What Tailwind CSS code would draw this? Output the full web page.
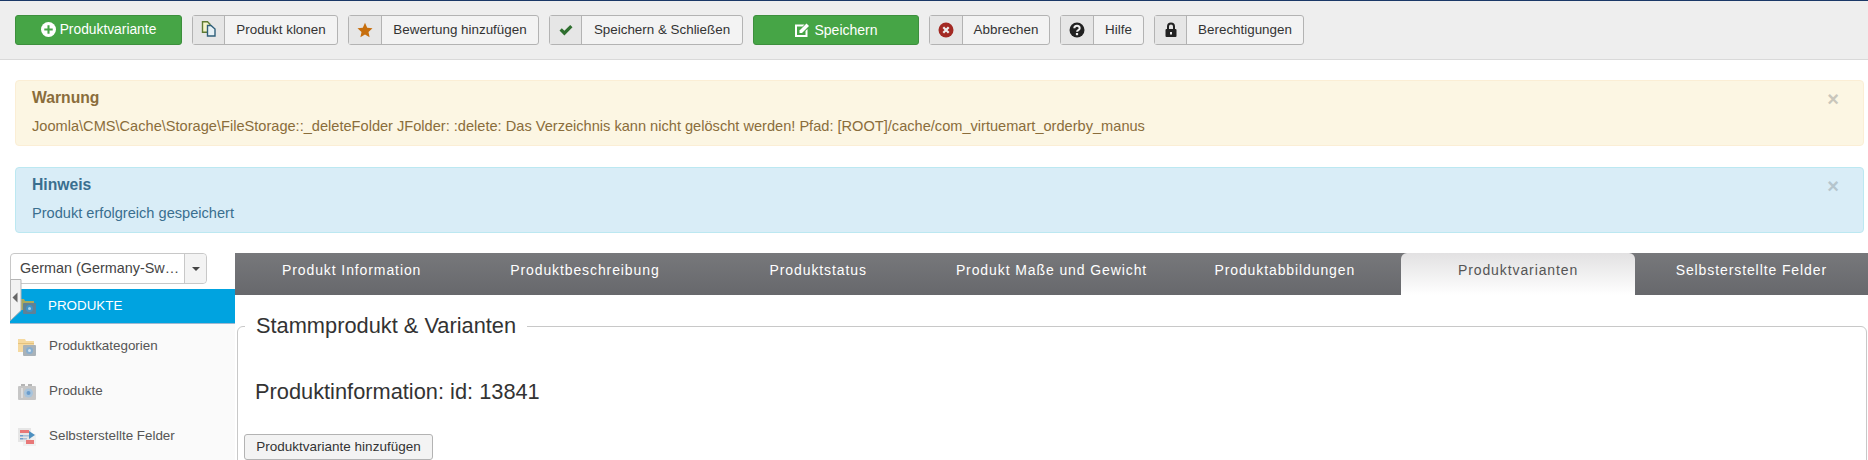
<!DOCTYPE html>
<html lang="en">
<head>
  <meta charset="UTF-8" />
  <title>Produkt bearbeiten</title>
  <script src="https://cdn.jsdelivr.net/npm/@tailwindcss/browser@4"></script>
</head>
<body class="h-[460px] w-[1868px] overflow-hidden bg-white font-['Liberation_Sans',Arial,sans-serif] text-[14px] text-[#333]">
  <!-- toolbar -->
  <div class="flex h-[60px] gap-[10px] border-t border-b border-t-[#1a3867] border-b-[#d9d9d9] bg-[#eeeeee] pl-[15px] pt-[14px] text-[13.4px]">
    <button class="flex h-[30px] w-[167px] items-center justify-center gap-[4px] rounded-[3px] border border-[#3d8f3d] bg-[#46a546] text-[13.8px] text-white">
      <svg class="mb-[1px] h-[15px] w-[15px]" viewBox="0 0 16 16"><circle cx="8" cy="8" r="8" fill="#fff"/><path d="M8 3.500v9M3.500 8h9" stroke="#46a546" stroke-width="2.200"/></svg>
      Produktvariante
    </button>
    <button class="flex h-[30px] w-[146px] items-center rounded-[3px] border border-[#b3b3b3] bg-[#f3f3f3]">
      <span class="flex h-full w-[32px] items-center justify-center border-r border-[#b3b3b3] bg-[#e6e6e6] pb-[2px]">
        <svg class="h-[16px] w-[16px]" viewBox="0 0 16 16" fill="none" stroke-width="1.400"><path d="M1.500 .8h5l2.500 2.500v8h-7.500z" fill="#f3f3c8" stroke="#5e7a32"/><path d="M6.500 4.500h3.500l4 3.500v7h-7.500z" fill="#e6f0f5" stroke="#2f5f7a"/></svg>
      </span>
      <span class="flex-1 text-center">Produkt klonen</span>
    </button>
    <button class="flex h-[30px] w-[191px] items-center rounded-[3px] border border-[#b3b3b3] bg-[#f3f3f3]">
      <span class="flex h-full w-[33px] items-center justify-center border-r border-[#b3b3b3] bg-[#e6e6e6] pb-[1px]">
        <svg class="h-[16px] w-[16px]" viewBox="0 0 16 16"><path d="M8 .8l2.200 4.900 5.300.6-4 3.600 1.100 5.300L8 12.500l-4.600 2.700 1.100-5.300-4-3.600 5.300-.6z" fill="#c76f0e"/></svg>
      </span>
      <span class="flex-1 text-center">Bewertung hinzufügen</span>
    </button>
    <button class="flex h-[30px] w-[194px] items-center rounded-[3px] border border-[#b3b3b3] bg-[#f3f3f3]">
      <span class="flex h-full w-[32px] items-center justify-center border-r border-[#b3b3b3] bg-[#e6e6e6] pb-[1px]">
        <svg class="h-[16px] w-[16px]" viewBox="0 0 16 16"><path d="M1.500 8.500l2.300-2.300 2.600 2.600 5.800-5.800 2.300 2.300-8.100 8.100z" fill="#2f6f2f"/></svg>
      </span>
      <span class="flex-1 text-center">Speichern &amp; Schließen</span>
    </button>
    <button class="flex h-[30px] w-[166px] items-center justify-center gap-[4px] rounded-[3px] border border-[#3d8f3d] bg-[#46a546] text-[14px] text-white">
      <svg class="mb-[1px] h-[16px] w-[16px]" viewBox="0 0 16 16"><path d="M1 2.500h9.500L8.500 4.500H3v8.500h8.500V9l2-2v8H1z" fill="#fff"/><path d="M5.500 8.500l7-7 2.500 2.500-7 7H5.500z" fill="#fff"/></svg>
      Speichern
    </button>
    <button class="flex h-[30px] w-[121px] items-center rounded-[3px] border border-[#b3b3b3] bg-[#f3f3f3]">
      <span class="flex h-full w-[33px] items-center justify-center border-r border-[#b3b3b3] bg-[#e6e6e6] pb-[1px]">
        <svg class="h-[16px] w-[16px]" viewBox="0 0 16 16"><circle cx="8" cy="8" r="7.500" fill="#a32a24"/><path d="M5.300 5.300l5.400 5.400M10.700 5.300l-5.400 5.400" stroke="#eee" stroke-width="2.200"/></svg>
      </span>
      <span class="flex-1 text-center">Abbrechen</span>
    </button>
    <button class="flex h-[30px] w-[84px] items-center rounded-[3px] border border-[#b3b3b3] bg-[#f3f3f3]">
      <span class="flex h-full w-[33px] items-center justify-center border-r border-[#b3b3b3] bg-[#e6e6e6] pb-[1px]">
        <svg class="h-[16px] w-[16px]" viewBox="0 0 16 16"><circle cx="8" cy="8" r="7.500" fill="#222"/><path d="M5.300 6.200c0-3.400 5.400-3.400 5.400 0 0 2-2.700 1.800-2.700 3.600" fill="none" stroke="#eee" stroke-width="2"/><rect x="6.900" y="11" width="2.200" height="2.200" fill="#eee"/></svg>
      </span>
      <span class="flex-1 text-center">Hilfe</span>
    </button>
    <button class="flex h-[30px] w-[150px] items-center rounded-[3px] border border-[#b3b3b3] bg-[#f3f3f3]">
      <span class="flex h-full w-[32px] items-center justify-center border-r border-[#b3b3b3] bg-[#e6e6e6] pb-[1px]">
        <svg class="h-[16px] w-[16px]" viewBox="0 0 16 16"><path d="M5 7V4.500a3 3 0 0 1 6 0V7" fill="none" stroke="#222" stroke-width="2"/><rect x="2.500" y="7" width="11" height="8" rx="1" fill="#222"/><rect x="7" y="10" width="2" height="2.500" fill="#eee"/></svg>
      </span>
      <span class="flex-1 text-center">Berechtigungen</span>
    </button>
  </div>

  <!-- messages -->
  <div class="mt-[20px] flex flex-col gap-[21px] pl-[15px] pr-[4px] text-[14.6px]">
    <div class="relative h-[66px] rounded-[4px] border border-[#fbeed5] bg-[#fcf6e3] pl-[16px] pt-[6px] text-[#8a6d3b]">
      <span class="absolute right-[24px] top-[6px] text-[20px] font-bold leading-[24px] text-[#c9c6bb]">×</span>
      <h4 class="text-[15.7px] font-bold leading-[22px]">Warnung</h4>
      <p class="mt-[7px] leading-[20px]">Joomla\CMS\Cache\Storage\FileStorage::_deleteFolder JFolder: :delete: Das Verzeichnis kann nicht gelöscht werden! Pfad: [ROOT]/cache/com_virtuemart_orderby_manus</p>
    </div>
    <div class="relative h-[66px] rounded-[4px] border border-[#bce8f1] bg-[#d9edf7] pl-[16px] pt-[6px] text-[#3a6f8f]">
      <span class="absolute right-[24px] top-[6px] text-[20px] font-bold leading-[24px] text-[#b5c5cd]">×</span>
      <h4 class="text-[15.7px] font-bold leading-[22px]">Hinweis</h4>
      <p class="mt-[7px] leading-[20px]">Produkt erfolgreich gespeichert</p>
    </div>
  </div>

  <div class="mt-[20px] flex">
    <!-- sidebar -->
    <aside class="relative ml-[10px] h-[207px] w-[225px] shrink-0 overflow-hidden">
      <div class="flex h-[31px] w-[197px] items-center rounded-[4px] border border-[#c8c8c8] bg-white">
        <span class="w-[173px] truncate pl-[9px] text-[14.4px] text-[#444]">German (Germany-Sw…</span>
        <span class="flex h-full flex-1 items-center justify-center rounded-r-[4px] border-l border-[#c8c8c8] bg-[#f3f3f3]">
          <span class="border-x-[4px] border-t-[4px] border-x-transparent border-t-[#444]"></span>
        </span>
      </div>
      <svg class="absolute left-0 top-[26px] z-10 h-[42px] w-[12px]" viewBox="0 0 12 42"><path d="M.5 .5h10.500v31L.5 41.500z" fill="#f2f2f2" stroke="#b5b5b5"/><path d="M7.500 13.500v10L2.500 18.500z" fill="#666"/></svg>
      <nav class="mt-[5px] h-[171px] bg-[#fafafa] text-[13.4px] text-[#555]">
        <a class="flex h-[35px] items-center gap-[12px] border-b border-[#9fb8d0] bg-[#00a3e0] pl-[8px] text-white">
          <svg class="h-[18px] w-[18px] shrink-0" viewBox="0 0 18 18"><path d="M0 2h6l1 2h9v9H0z" fill="#a9a95e"/><rect x="5" y="6" width="13" height="11" rx="1" fill="#5f8196"/><circle cx="11.500" cy="11.500" r="3.500" fill="#3f94c8"/><circle cx="11.500" cy="11.500" r="1.500" fill="#a8d4ee"/></svg>
          PRODUKTE
        </a>
        <a class="flex h-[45px] items-center gap-[13px] pl-[8px]">
          <svg class="h-[18px] w-[18px] shrink-0" viewBox="0 0 18 18"><path d="M0 1h7l1 2h8v11H0z" fill="#f5d9a0"/><path d="M0 5h16v1H0z" fill="#e4c27e"/><rect x="5" y="7" width="13" height="11" rx="1" fill="#a9b2b8"/><circle cx="11.500" cy="12.500" r="3.500" fill="#86aed0"/><circle cx="11.500" cy="12.500" r="1.500" fill="#d0e2f0"/></svg>
          Produktkategorien
        </a>
        <a class="flex h-[45px] items-center gap-[13px] pl-[8px]">
          <svg class="h-[18px] w-[18px] shrink-0" viewBox="0 0 18 18"><rect x="0" y="3" width="18" height="14" rx="1" fill="#c6c6c6"/><rect x="3" y="1" width="4" height="2" fill="#b5b5b5"/><rect x="10" y="1" width="4" height="2" fill="#b5b5b5"/><rect x="3" y="5" width="2" height="10" fill="#dedede"/><circle cx="10.500" cy="10" r="4.500" fill="#a8c4dc"/><circle cx="10.500" cy="10" r="2" fill="#6a9ccc"/></svg>
          Produkte
        </a>
        <a class="flex h-[45px] items-center gap-[13px] pl-[8px]">
          <svg class="h-[18px] w-[18px] shrink-0" viewBox="0 0 18 18"><rect x="0" y="0" width="13" height="14" fill="#e6e6e6"/><rect x="2" y="2" width="9" height="3" fill="#e87878"/><rect x="2" y="7" width="9" height="1.500" fill="#6c9ccc"/><rect x="2" y="10" width="7" height="1.500" fill="#6c9ccc"/><rect x="5" y="6" width="13" height="12" fill="#e6e6e6" fill-opacity=".5"/><rect x="8" y="12" width="8" height="4" fill="#e87878"/><path d="M11 3l6 4-6 4z" fill="#4d90c0"/></svg>
          Selbsterstellte Felder
        </a>
      </nav>
    </aside>

    <main class="h-[207px] w-[1633px] shrink-0 overflow-hidden">
      <!-- tabs -->
      <div class="grid h-[42px] grid-cols-7 bg-gradient-to-b from-[#77787b] to-[#67686c] text-center text-[14px] tracking-[0.9px] text-white">
        <div class="pt-[7px]">Produkt Information</div>
        <div class="pt-[7px]">Produktbeschreibung</div>
        <div class="pt-[7px]">Produktstatus</div>
        <div class="pt-[7px]">Produkt Maße und Gewicht</div>
        <div class="pt-[7px]">Produktabbildungen</div>
        <div class="rounded-t-[6px] bg-gradient-to-b from-[#e2e1e2] to-white pt-[7px] text-[#555]">Produktvarianten</div>
        <div class="pt-[7px]">Selbsterstellte Felder</div>
      </div>
      <!-- fieldset runs on below the window -->
      <fieldset class="ml-[2px] mr-[1px] mt-[19px] h-[180px] rounded-[6px] border border-[#c8c8c8] pl-[6px]">
        <legend class="ml-[1px] px-[11px] text-[21.8px] leading-[24px]">Stammprodukt &amp; Varianten</legend>
        <h3 class="ml-[11px] mt-[41px] text-[21.8px] leading-[26px]">Produktinformation: id: 13841</h3>
        <button class="mt-[29px] h-[26px] w-[189px] rounded-[3px] border border-[#b3b3b3] bg-[#f3f3f3] text-[13.5px]">Produktvariante hinzufügen</button>
      </fieldset>
    </main>
  </div>
</body>
</html>
